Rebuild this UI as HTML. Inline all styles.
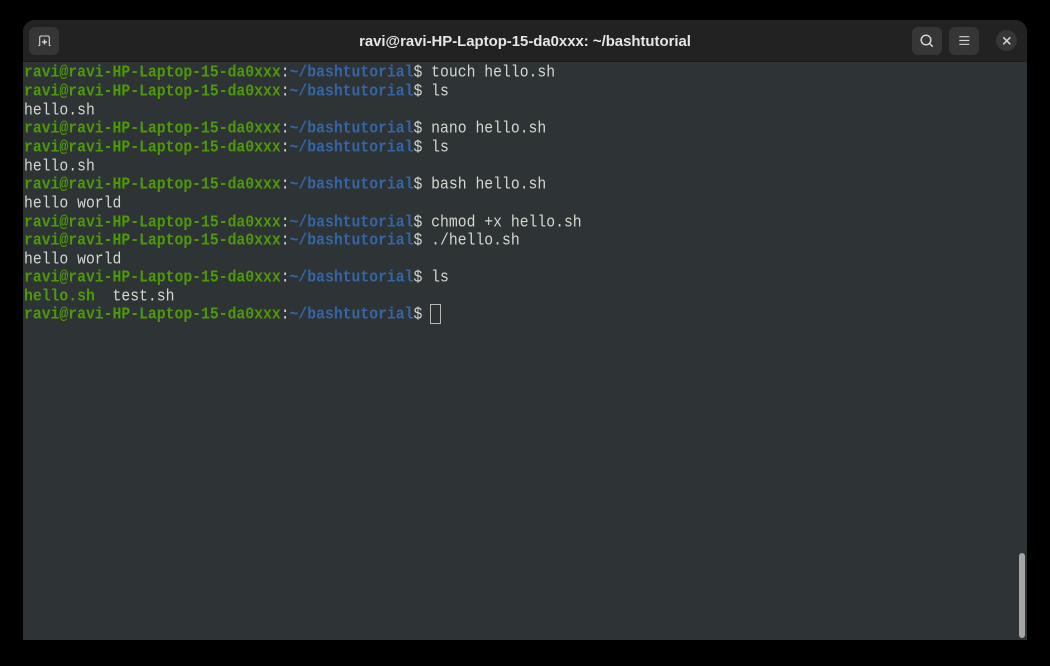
<!DOCTYPE html>
<html><head><meta charset="utf-8">
<style>
html,body{margin:0;padding:0;background:#000;width:1050px;height:666px;overflow:hidden}
#win{position:absolute;left:23px;top:20px;width:1004px;height:620px;border-radius:12px 12px 0 0;overflow:hidden;background:#2e3436}
#hb{position:absolute;left:0;top:0;width:1004px;height:41px;background:#222222;border-bottom:1px solid #191919}
.btn{position:absolute;top:7px;width:30px;height:28px;background:#363636;border-radius:6px}
#title{position:absolute;left:0;right:0;top:1px;height:42px;text-align:center;color:#e6e6e6;font:bold 14.900px/42px "Liberation Sans",sans-serif}
.l{position:absolute;left:24px;height:17px;font:14.750px/17px "Liberation Mono",monospace;color:#d3d7cf;white-space:pre;transform:scaleY(1.120);transform-origin:0 0}
b{font-weight:bold}
.g{color:#4e9a06}.u{color:#3465a4}
.f{color:#4e9a06;font-weight:bold}
#cur{position:absolute;left:430px;top:304px;width:9px;height:18px;border:1px solid #b4b7b2}
#sb{position:absolute;left:1019px;top:553px;width:5.500px;height:85px;background:#a4a5a5;border-radius:3px}
</style></head><body>
<div id="win">
<div id="hb">
<div class="btn" style="left:6px"></div>
<div class="btn" style="left:889px"></div>
<div class="btn" style="left:926px"></div>
<div style="position:absolute;left:973px;top:10px;width:21px;height:21px;border-radius:50%;background:#363636"></div>
<div id="title">ravi@ravi-HP-Laptop-15-da0xxx: ~/bashtutorial</div>
<svg style="position:absolute;left:0;top:0" width="1004" height="42" fill="none" stroke="#d4d4d4" stroke-width="1.200">
<path d="M15.300 25.500h1.400V17.500a1.500 1.500 0 0 1 1.500-1.500h6.600a1.500 1.500 0 0 1 1.500 1.500v8h1.400" stroke-width="1.100"/>
<path d="M21.500 19.500v5M19 22h5" stroke-width="1.400"/>
<circle cx="903" cy="20" r="4.800" stroke-width="1.500"/><path d="M906.500 23.500l3.200 3.200" stroke-width="1.500"/>
<path d="M936.300 16.700h10M936.300 20.500h10M936.300 24.300h10" stroke-width="1.200"/>
<path d="M980.300 17.300l7 7M987.300 17.300l-7 7" stroke-width="1.500"/>
</svg>
</div>
</div>
<div class="l" style="top:64px"><b class="g">ravi@ravi-HP-Laptop-15-da0xxx</b>:<b class="u">~/bashtutorial</b>$ touch hello.sh</div>
<div class="l" style="top:83px"><b class="g">ravi@ravi-HP-Laptop-15-da0xxx</b>:<b class="u">~/bashtutorial</b>$ ls</div>
<div class="l" style="top:102px">hello.sh</div>
<div class="l" style="top:120px"><b class="g">ravi@ravi-HP-Laptop-15-da0xxx</b>:<b class="u">~/bashtutorial</b>$ nano hello.sh</div>
<div class="l" style="top:139px"><b class="g">ravi@ravi-HP-Laptop-15-da0xxx</b>:<b class="u">~/bashtutorial</b>$ ls</div>
<div class="l" style="top:158px">hello.sh</div>
<div class="l" style="top:176px"><b class="g">ravi@ravi-HP-Laptop-15-da0xxx</b>:<b class="u">~/bashtutorial</b>$ bash hello.sh</div>
<div class="l" style="top:195px">hello world</div>
<div class="l" style="top:214px"><b class="g">ravi@ravi-HP-Laptop-15-da0xxx</b>:<b class="u">~/bashtutorial</b>$ chmod +x hello.sh</div>
<div class="l" style="top:232px"><b class="g">ravi@ravi-HP-Laptop-15-da0xxx</b>:<b class="u">~/bashtutorial</b>$ ./hello.sh</div>
<div class="l" style="top:251px">hello world</div>
<div class="l" style="top:269px"><b class="g">ravi@ravi-HP-Laptop-15-da0xxx</b>:<b class="u">~/bashtutorial</b>$ ls</div>
<div class="l" style="top:288px"><span class="f">hello.sh</span>  test.sh</div>
<div class="l" style="top:306px"><b class="g">ravi@ravi-HP-Laptop-15-da0xxx</b>:<b class="u">~/bashtutorial</b>$ </div>
<div id="cur"></div>
<div id="sb"></div>
</body></html>
